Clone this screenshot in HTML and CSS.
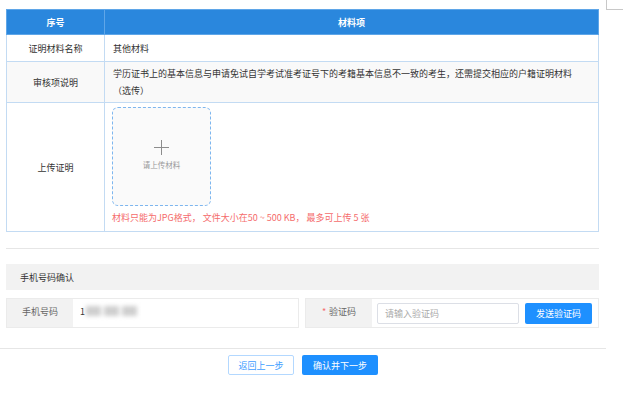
FILE: index.html
```html
<!DOCTYPE html>
<html lang="zh">
<head>
<meta charset="utf-8">
<link rel="stylesheet" href="styles.css">
</head>
<body>
<div class="page">
  <div class="corner"></div>
  <div class="content">
    <table class="mat">
      <thead>
        <tr><th class="c1">序号</th><th>材料项</th></tr>
      </thead>
      <tbody>
        <tr class="r1"><td class="c1">证明材料名称</td><td>其他材料</td></tr>
        <tr class="r2 alt"><td class="c1">审核项说明</td><td>学历证书上的基本信息与申请免试自学考试准考证号下的考籍基本信息不一致的考生，还需提交相应的户籍证明材料<br>（选传）</td></tr>
        <tr class="r3"><td class="c1">上传证明</td><td>
          <div class="upload">
            <div class="plus"></div>
            <div class="upload-text">请上传材料</div>
          </div>
          <div class="tip">材料只能为JPG格式， 文件大小在50 ~ 500 KB， 最多可上传 5 张</div>
        </td></tr>
      </tbody>
    </table>
    <div class="divider"></div>
    <div class="sec-head">手机号码确认</div>
    <div class="phone-row">
      <div class="group g1">
        <div class="label">手机号码</div>
        <div class="value"><span>1</span><span class="blur"><i></i><i></i><i></i></span></div>
      </div>
      <div class="group g2">
        <div class="label"><span class="req">*</span> 验证码</div>
        <div class="value code">
          <div class="input">请输入验证码</div>
          <div class="btn-send">发送验证码</div>
        </div>
      </div>
    </div>
  </div>
  <div class="footer">
    <div class="btn-back">返回上一步</div>
    <div class="btn-next">确认并下一步</div>
  </div>
</div>
</body>
</html>
```
FILE: styles.css
```css
* { box-sizing: border-box; }
body {
  margin: 0;
  font-family: "Noto Sans CJK SC", "Microsoft YaHei", sans-serif;
  font-size: 9px;
  color: #333;
  background: #fff;
}
.page { width: 606px; position: relative; }
.corner {
  position: absolute;
  left: 606px; top: 0;
  width: 17px; height: 10px;
  border-left: 1px solid #c8c8c8;
  border-bottom: 1px solid #c8c8c8;
}
.content { padding: 9px 7px 0 6px; }
.mat {
  width: 593px;
  border-collapse: collapse;
  table-layout: fixed;
  border: 1px solid #c3dbf3;
}
.mat th, .mat td {
  border: 1px solid #c3dbf3;
  padding: 0 8px;
  font-weight: normal;
}
.mat .c1 { width: 98px; text-align: center; }
.mat th {
  background: #2a87dd;
  color: #fff;
  font-weight: bold;
  height: 25px;
  text-align: center;
  border-color: #5fa6e8;
}
.r1 td { height: 27px; }
.r2 td { height: 41px; line-height: 17px; padding-top: 3px; padding-bottom: 3px; }
.alt td { background: #f9f9f9; }
.r3 td { height: 129px; vertical-align: middle; }
.r3 td + td { vertical-align: top; padding-top: 4px; padding-left: 7px; }
.upload {
  width: 99px; height: 99px;
  border: 1px dashed #7db6ef;
  border-radius: 6px;
  background: #fafafa;
  display: flex;
  flex-direction: column;
  align-items: center;
  padding-top: 32px;
}
.plus { width: 15px; height: 15px; position: relative; }
.plus::before, .plus::after {
  content: "";
  position: absolute;
  background: #8c8c8c;
}
.plus::before { left: 7px; top: 0; width: 1px; height: 15px; }
.plus::after { top: 7px; left: 0; height: 1px; width: 15px; }
.upload-text { font-size: 7.5px; color: #999; margin-top: 4px; }
.tip { color: #f56c6c; margin-top: 4px; line-height: 15px; }
.divider { margin-top: 16px; border-top: 1px solid #e6e6e6; width: 593px; }
.sec-head {
  margin-top: 15px;
  height: 26px;
  background: #f2f2f2;
  padding-left: 14px;
  display: flex;
  align-items: center;
  color: #333;
  width: 593px;
}
.phone-row {
  margin-top: 8px;
  display: flex;
  gap: 6px;
  width: 593px;
}
.group {
  height: 30px;
  border: 1px solid #ebebeb;
  display: flex;
}
.g1 { width: 293px; }
.g2 { width: 294px; }
.label {
  width: 66px;
  background: #f2f2f2;
  color: #666;
  display: flex;
  align-items: center;
  justify-content: center;
  padding-bottom: 4px;
}
.g2 .label { width: 67px; }
.req { color: #f56c6c; margin-right: 3px; }
.value {
  flex: 1;
  display: flex;
  align-items: center;
  padding-left: 7px;
  padding-bottom: 4px;
  color: #333;
}
.blur {
  display: flex;
  gap: 3px;
  margin-left: 1px;
  filter: blur(2px);
}
.blur i {
  display: block;
  width: 15px;
  height: 10px;
  background: #cfcfcf;
}
.value.code { padding: 0 6px 0 5px; gap: 6px; }
.input {
  width: 142px;
  height: 21px;
  border: 1px solid #dcdfe6;
  border-radius: 2px;
  padding-left: 7px;
  display: flex;
  align-items: center;
  color: #aaa;
}
.btn-send {
  width: 67px;
  height: 21px;
  background: #1e90ff;
  color: #fff;
  border-radius: 2px;
  display: flex;
  align-items: center;
  justify-content: center;
}
.footer {
  margin-top: 20px;
  border-top: 1px solid #e6e6e6;
  padding-top: 6px;
  display: flex;
  justify-content: center;
  gap: 8px;
}
.btn-back, .btn-next {
  height: 20px;
  display: flex;
  align-items: center;
  justify-content: center;
  border-radius: 2px;
}
.btn-back {
  width: 66px;
  border: 1px solid #b3d8ff;
  color: #409eff;
  background: #fff;
}
.btn-next {
  width: 76px;
  background: #1e90ff;
  color: #fff;
}
```
